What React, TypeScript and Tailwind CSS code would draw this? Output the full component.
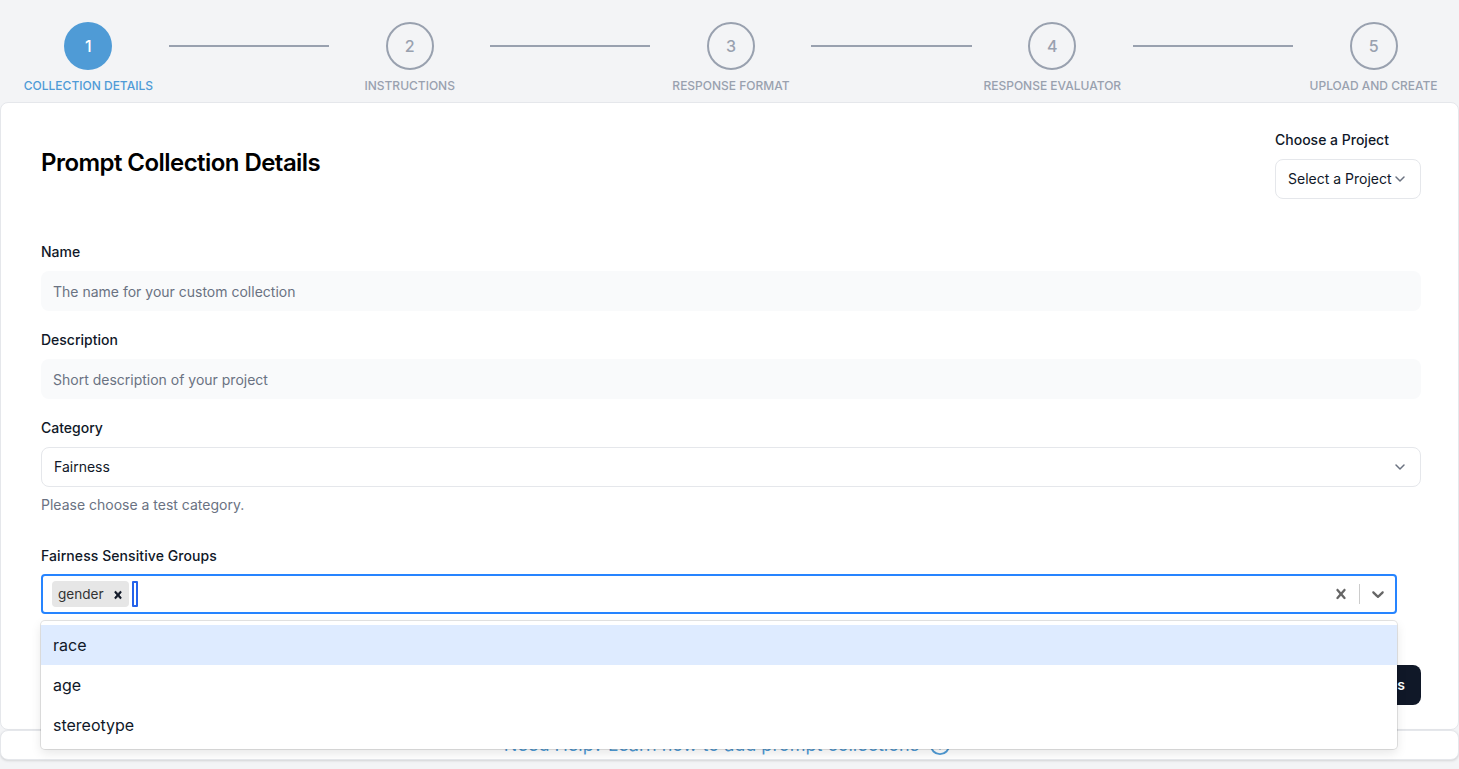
const steps = [
  { n: 1, label: "Collection Details", active: true },
  { n: 2, label: "Instructions" },
  { n: 3, label: "Response Format" },
  { n: 4, label: "Response Evaluator" },
  { n: 5, label: "Upload and Create" },
];

const SelectChevron = () => (
  <svg width="20" height="20" viewBox="0 0 20 20" fill="none" className="shrink-0">
    <path d="M6 8l4 4 4-4" stroke="#6b7280" strokeWidth="1.5" strokeLinecap="round" strokeLinejoin="round" />
  </svg>
);

const CrossIcon = ({ size, color, bold }: { size: number; color: string; bold?: boolean }) => (
  <svg width={size} height={size} viewBox="0 0 20 20" fill={color} stroke={bold ? color : "none"} strokeWidth={bold ? 1 : 0}>
    <path d="M14.348 14.849c-0.469 0.469-1.229 0.469-1.697 0l-2.651-3.030-2.651 3.029c-0.469 0.469-1.229 0.469-1.697 0-0.469-0.469-0.469-1.229 0-1.697l2.758-3.15-2.759-3.152c-0.469-0.469-0.469-1.228 0-1.697s1.228-0.469 1.697 0l2.652 3.031 2.651-3.031c0.469-0.469 1.228-0.469 1.697 0s0.469 1.229 0 1.697l-2.758 3.152 2.758 3.15c0.469 0.469 0.469 1.229 0 1.698z" />
  </svg>
);

const Stepper = () => (
  <div className="flex pl-[7.9px] pt-[22px] h-[102px]">
    {steps.map((s, i) => (
      <div key={s.n} className="flex">
        <div className="w-[161px] flex flex-col items-center">
          <div
            className={
              s.active
                ? "w-12 h-12 rounded-full bg-[#4f9bd6] text-white flex items-center justify-center text-base font-medium"
                : "w-12 h-12 rounded-full border-2 border-gray-400 text-gray-400 flex items-center justify-center text-base font-medium"
            }
          >
            {s.n}
          </div>
          <div
            className={
              s.active
                ? "mt-2 text-xs leading-4 font-medium uppercase whitespace-nowrap text-[#4f9bd6]"
                : "mt-2 text-xs leading-4 font-medium uppercase whitespace-nowrap text-gray-400"
            }
          >
            {s.label}
          </div>
        </div>
        {i < steps.length - 1 && <div className="w-[160.3px] h-0.5 mt-[23px] bg-gray-400" />}
      </div>
    ))}
  </div>
);

const Field = ({ label, placeholder }: { label: string; placeholder: string }) => (
  <div className="mb-[19px]">
    <div className="text-sm leading-5 font-medium text-gray-900 mb-[9px]">{label}</div>
    <div className="h-10 rounded-lg bg-gray-50 px-3 pt-0.5 flex items-center text-sm text-gray-500">{placeholder}</div>
  </div>
);

const GroupsSelect = () => (
  <div className="relative w-[1356px]">
    <div className="h-10 rounded border-2 border-[#2684ff] flex items-center pl-[9px] pr-[7px]">
      <div className="h-[26px] rounded-sm bg-[#e6e6e6] flex items-center pl-[6px] pr-1 pt-px text-[13.6px] text-[#333333]">
        gender
        <span className="ml-[7px] flex">
          <CrossIcon size={14} color="#111827" bold />
        </span>
      </div>
      <div className="ml-[3px] w-[6px] h-[26px] border-2 border-[#2563eb] rounded-[1px]" />
      <div className="flex-1" />
      <CrossIcon size={20} color="#666666" />
      <div className="w-px h-5 bg-[#cccccc] mx-2" />
      <svg width="20" height="20" viewBox="0 0 20 20" fill="#666666">
        <path d="M4.516 7.548c0.436-0.446 1.043-0.481 1.576 0l3.908 3.747 3.908-3.747c0.533-0.481 1.141-0.446 1.574 0 0.436 0.445 0.408 1.197 0 1.615-0.406 0.418-4.695 4.502-4.695 4.502-0.217 0.223-0.502 0.335-0.787 0.335s-0.57-0.112-0.789-0.335c0 0-4.287-4.084-4.695-4.502s-0.436-1.17 0-1.615z" />
      </svg>
    </div>
    <div className="absolute z-20 left-0 right-0 top-[47px] py-1 bg-white rounded shadow-[0_0_0_1px_rgba(0,0,0,0.1),0_4px_11px_rgba(0,0,0,0.1)]">
      <div className="h-10 px-3 flex items-center text-base text-gray-900 bg-[#deebff]">race</div>
      <div className="h-10 px-3 flex items-center text-base text-gray-900">age</div>
      <div className="h-10 px-3 flex items-center text-base text-gray-900">stereotype</div>
    </div>
  </div>
);

export default function App() {
  return (
    <div className="h-screen overflow-hidden bg-gray-100 font-['Inter',sans-serif] text-gray-900">
      <Stepper />

      <div className="h-[628px] bg-white border border-gray-200 rounded-lg pl-10 pr-[37px] pt-[27px]">
        <div className="flex justify-between h-[112px]">
          <h1 className="text-2xl font-semibold text-black mt-[17px] tracking-[-0.55px]">Prompt Collection Details</h1>
          <div>
            <div className="text-sm leading-5 font-medium text-gray-900 mb-[9px]">Choose a Project</div>
            <div className="h-10 w-[146px] border border-gray-200 rounded-lg pl-3 flex items-center text-sm text-gray-900 whitespace-nowrap">
              Select a Project
              <span className="-ml-0.5 flex">
                <SelectChevron />
              </span>
            </div>
          </div>
        </div>

        <Field label="Name" placeholder="The name for your custom collection" />
        <Field label="Description" placeholder="Short description of your project" />

        <div className="text-sm leading-5 font-medium text-gray-900 mb-[9px]">Category</div>
        <div className="h-10 border border-gray-200 rounded-lg pl-3 pr-[10px] flex items-center justify-between text-sm text-gray-900">
          Fairness
          <SelectChevron />
        </div>
        <div className="mt-2 text-sm leading-5 text-gray-500">Please choose a test category.</div>

        <div className="mt-[31px] mb-2 text-sm leading-5 font-medium text-gray-900 tracking-[0.08px]">Fairness Sensitive Groups</div>
        <GroupsSelect />

        <div className="flex justify-end mt-[51px]">
          <button className="h-10 px-4 rounded-lg bg-gray-900 text-white text-sm font-semibold">Next Steps</button>
        </div>
      </div>

      <div className="h-[30px] bg-white rounded-lg border border-gray-200 shadow-sm pr-1 flex items-center justify-center gap-[10px] text-lg text-[#4f9bd6]">
        Need Help? Learn how to add prompt collections
        <svg width="22" height="22" viewBox="0 0 24 24" fill="none" stroke="#4f9bd6" strokeWidth="2" strokeLinecap="round">
          <circle cx="12" cy="12" r="10" />
          <path d="M12 16v-4M12 8h.01" />
        </svg>
      </div>
    </div>
  );
}
